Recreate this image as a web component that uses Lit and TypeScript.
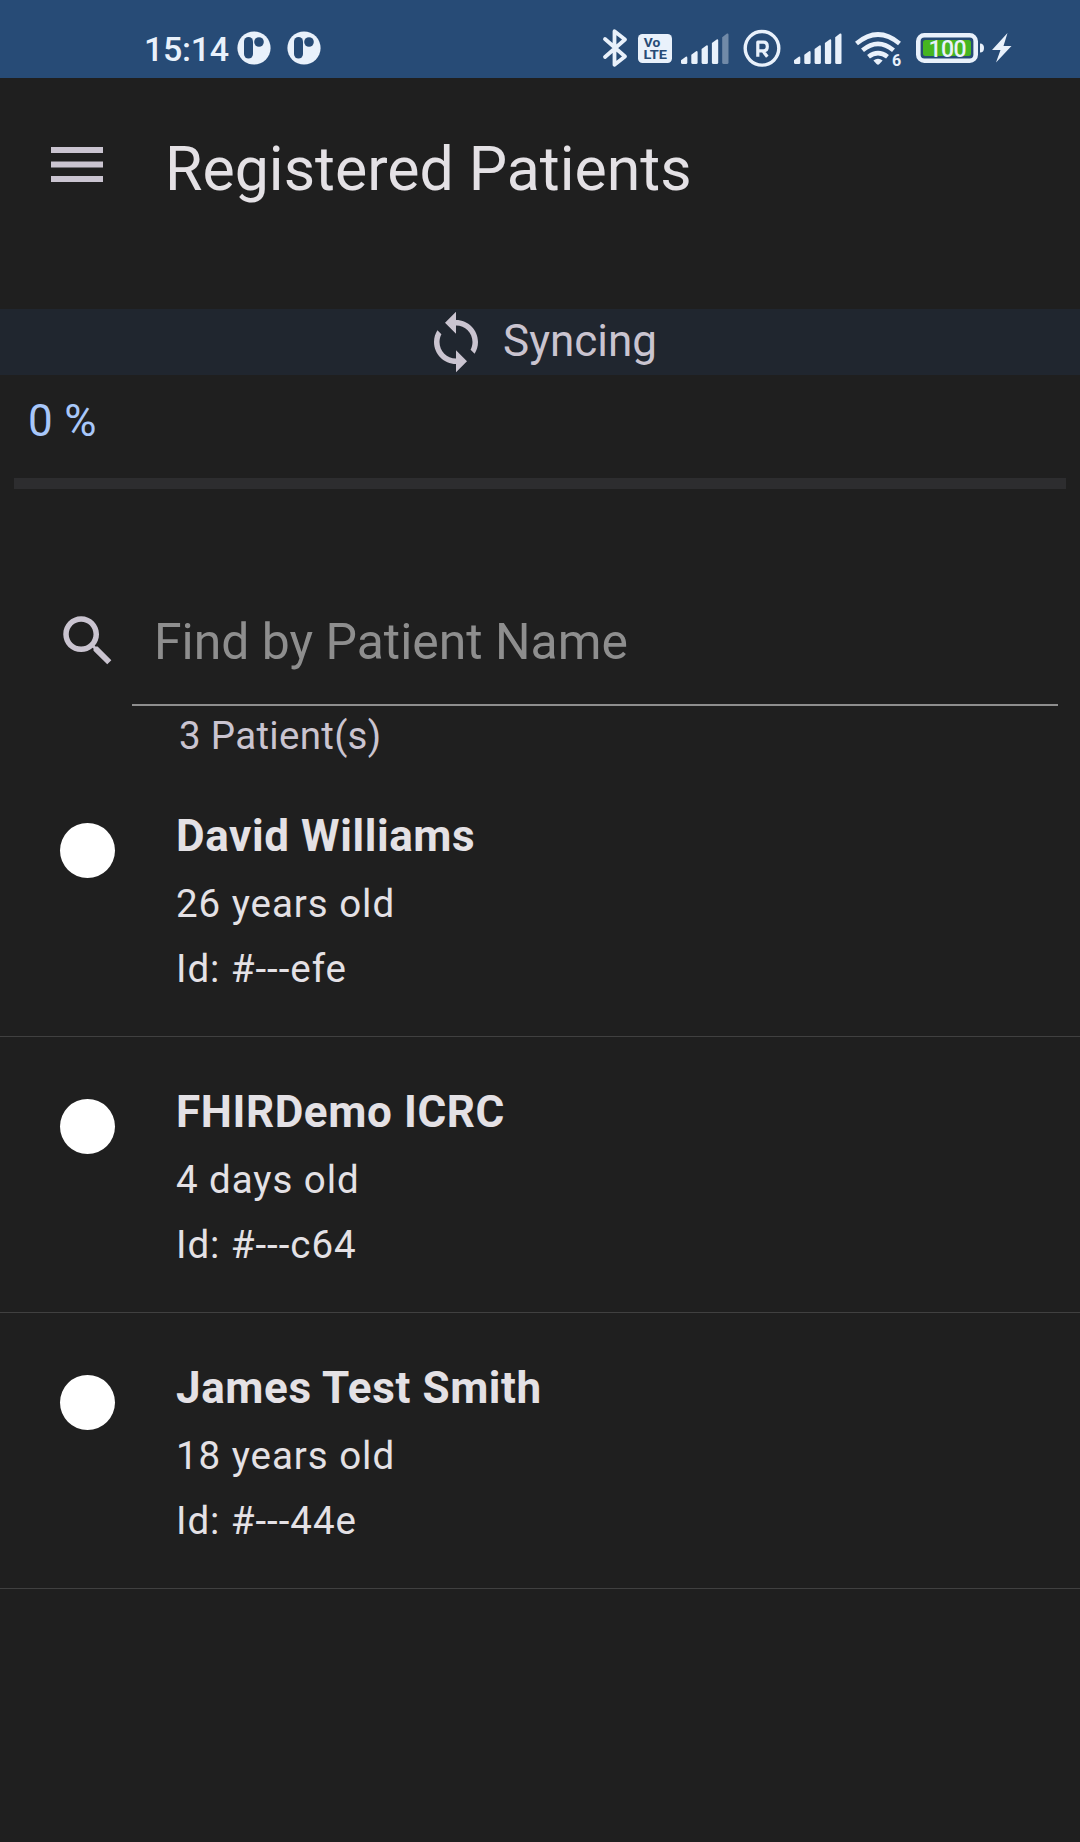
import { LitElement, html, svg, css } from "lit";
import { customElement, property } from "lit/decorators.js";

@customElement("status-bar")
class StatusBar extends LitElement {
  static styles = css`
    :host { display: flex; align-items: flex-start; height: 78px; box-sizing: border-box; padding: 28px 68px 0 144px;
      background: #274b76; color: #e9f1fb; font-family: Roboto, sans-serif; }
    svg { display: block; flex: none; height: 40px; fill: currentColor; }
    .time { font-size: 34px; font-weight: 500; line-height: 43px; width: 93px; white-space: nowrap; letter-spacing: -0.3px; }
    .app { width: 34px; margin-right: 16px; }
    .hole { fill: #274b76; }
    .line { fill: none; stroke: currentColor; }
    .dim { opacity: 0.38; }
    .right { display: flex; margin-left: auto; }
    .bt { width: 28px; }
    .volte { width: 36px; margin-left: 8px; }
    .sig { width: 50px; margin-left: 7.3px; }
    .reg { width: 40px; margin-left: 11.2px; }
    .sig2 { margin-left: 11.8px; }
    .wifi { width: 49px; margin-left: 10.7px; }
    .batt { width: 70px; margin-left: 12px; }
    .bolt { width: 22px; margin-left: 5px; }
    .b { font-weight: 700; }
    .m { font-weight: 500; }
  `;
  private signal(cls: string, full: boolean) {
    const tops = [28.3, 22.8, 17, 11, 5.2];
    return html`<svg class=${cls} viewBox="0 0 50 40">
      ${tops.map((t, i) => {
        const x = 1 + i * 10.3;
        return svg`<path class=${i === 4 && !full ? "dim" : ""} d="M${x} ${t + 4}L${x + 4.8} ${t + 0.4}Q${x + 6.3} ${t} ${x + 6.3} ${t + 1.6}V34.5Q${x + 6.3} 36 ${x + 4.8} 36H${x + 1.5}Q${x} 36 ${x} 34.5Z"/>`;
      })}
    </svg>`;
  }
  private app() {
    return html`<svg class="app" viewBox="237 28 34 40">
      <circle cx="254" cy="48" r="16.6"/>
      <rect class="hole" x="244" y="37" width="9" height="21.5" rx="4.5"/>
      <circle class="hole" cx="259" cy="42" r="4.8"/>
    </svg>`;
  }
  render() {
    return html`
      <span class="time">15:14</span>
      ${this.app()}${this.app()}
      <div class="right">
        <svg class="bt" viewBox="601 28 28 40"><path class="line" stroke-width="3.8" stroke-linejoin="round" stroke-linecap="round" d="M605 39L625 56.5L614.5 64.8V31.2L625 39.5L605 57"/></svg>
        <svg class="volte" viewBox="637 28 36 40"><rect x="638" y="34" width="34" height="29" rx="4.5"/>
          <text class="hole b" x="643.8" y="47" font-size="12.5" textLength="16.5" lengthAdjust="spacingAndGlyphs">Vo</text>
          <text class="hole b" x="643.5" y="59.4" font-size="12.8" textLength="23.5" lengthAdjust="spacingAndGlyphs">LTE</text></svg>
        ${this.signal("sig", false)}
        <svg class="reg" viewBox="741.5 28 40 40"><circle class="line" stroke-width="3.4" cx="761.5" cy="48.3" r="16.8"/>
          <path class="line" stroke-width="3.2" stroke-linejoin="round" d="M757.3 56.7V42.2H763Q766.8 42.2 766.8 46.5T763 50.8H757.3M762.3 50.8L766.8 56.7"/></svg>
        ${this.signal("sig sig2", true)}
        <svg class="wifi" viewBox="854 28 49 40">
          <g class="line" stroke-width="4.6"><path d="M856.5 43.5Q878 25.5 899.5 43.5"/><path d="M862.5 50.3Q878 37.5 893.5 50.3"/><path d="M868.5 56.8Q878 49.5 887.5 56.8"/></g>
          <path d="M873.4 60.5Q878 57 882.6 60.5L879.4 64Q878 65.4 876.6 64Z"/>
          <text class="b" x="892" y="65.5" font-size="16">6</text></svg>
        <svg class="batt" viewBox="915 28 70 40"><rect class="line" stroke-width="4.6" x="918.3" y="35.3" width="57.4" height="25.4" rx="6"/>
          <rect x="923" y="40" width="48" height="16" rx="2.5" fill="#46b521"/><path d="M980 43.5Q984 43.5 984 48T980 52.5Z"/>
          <text class="m" x="928.5" y="56.5" font-size="23" textLength="38">100</text></svg>
        <svg class="bolt" viewBox="990 28 22 40"><path d="M1007.5 33L992 50H1000.5L996 62.5L1011.5 46H1003.5Z"/></svg>
      </div>`;
  }
}

@customElement("patient-row")
class PatientRow extends LitElement {
  @property() name = "";
  @property() age = "";
  @property() pid = "";
  static styles = css`
    :host { display: flex; gap: 61px; height: 276px; box-sizing: border-box; padding: 34px 0 0 60px;
      border-bottom: 1px solid #404040; color: #e4e1e5; font-family: Roboto, sans-serif; }
    .dot { width: 55px; height: 55px; margin-top: 28px; border-radius: 50%; background: #fff; flex: none; }
    .text { display: flex; flex-direction: column; white-space: nowrap; }
    .name { font-size: 44px; line-height: 68px; font-weight: 700; letter-spacing: 0.6px; margin: 7px 0 1px; }
    .sub { font-size: 38.5px; line-height: 65px; letter-spacing: 0.95px; }
  `;
  render() {
    return html`<span class="dot"></span>
      <div class="text"><span class="name">${this.name}</span><span class="sub">${this.age}</span><span class="sub">Id: #---${this.pid}</span></div>`;
  }
}

const PATIENTS = [
  { name: "David Williams", age: "26 years old", pid: "efe" },
  { name: "FHIRDemo ICRC", age: "4 days old", pid: "c64" },
  { name: "James Test Smith", age: "18 years old", pid: "44e" },
];

@customElement("app-root")
class AppRoot extends LitElement {
  static styles = css`
    :host { display: block; height: 1842px; overflow: hidden; background: #1f1f1f; font-family: Roboto, sans-serif; white-space: nowrap; }
    svg { display: block; flex: none; fill: #cac4d0; }
    .header { display: flex; height: 231px; box-sizing: border-box; padding: 56px 0 0 51px; }
    .menu { width: 52px; height: 36px; margin-top: 13px; }
    h1 { margin: 0 0 0 62px; font-size: 60.8px; line-height: 72px; font-weight: 400; color: #e4e1e5; }
    .sync { display: flex; height: 66px; padding-left: 423px; background: #20262f; color: #cac4d0; font-size: 44px; line-height: 65px; }
    .i66 { width: 66px; height: 66px; }
    .label { margin-left: 14px; }
    .pct { padding: 20px 0 0 28px; height: 83px; box-sizing: border-box; color: #a8c7fa; font-size: 44px; line-height: 52px; letter-spacing: 0.3px; }
    .track { margin: 20px 14px 0; height: 11px; background: #2d2d2f; }
    .search { display: flex; height: 217px; box-sizing: border-box; padding: 0 22px 0 55px; align-items: stretch; }
    .search svg { margin-top: 119px; }
    .field { flex: 1; margin-left: 11px; padding: 121px 0 0 22px; border-bottom: 2px solid #8e8e8e; color: #8e8e8e; font-size: 49.9px; line-height: 64px; }
    .count { height: 55px; padding-left: 179px; color: #cac4d0; font-size: 38.5px; line-height: 60px; letter-spacing: 0.3px; }
  `;
  render() {
    return html`
      <status-bar></status-bar>
      <header class="header">
        <svg class="menu" viewBox="0 0 52 36"><path d="M0 0H52V6H0ZM0 14.5H52V20.5H0ZM0 29H52V35H0Z"/></svg>
        <h1>Registered Patients</h1>
      </header>
      <div class="sync">
        <svg class="i66" viewBox="0 0 24 24"><path d="M12 4V1L8 5l4 4V6c3.31 0 6 2.69 6 6 0 1.01-.25 1.97-.7 2.8l1.46 1.46C19.54 15.03 20 13.57 20 12c0-4.42-3.58-8-8-8zm0 14c-3.31 0-6-2.69-6-6 0-1.01.25-1.97.7-2.8L5.24 7.74C4.46 8.97 4 10.43 4 12c0 4.42 3.58 8 8 8v3l4-4-4-4v3z"/></svg>
        <span class="label">Syncing</span>
      </div>
      <div class="pct">0 %</div>
      <div class="track"></div>
      <div class="search">
        <svg class="i66" viewBox="0 0 24 24"><path d="M15.5 14h-.79l-.28-.27C15.41 12.59 16 11.11 16 9.5 16 5.91 13.09 3 9.5 3S3 5.91 3 9.5 5.91 16 9.5 16c1.61 0 3.09-.59 4.23-1.57l.27.28v.79l5 4.99L20.49 19l-4.99-5zm-6 0C7.01 14 5 11.99 5 9.5S7.01 5 9.5 5 14 7.01 14 9.5 11.99 14 9.5 14z"/></svg>
        <div class="field">Find by Patient Name</div>
      </div>
      <div class="count">3 Patient(s)</div>
      <main>${PATIENTS.map((p) => html`<patient-row .name=${p.name} .age=${p.age} .pid=${p.pid}></patient-row>`)}</main>`;
  }
}
